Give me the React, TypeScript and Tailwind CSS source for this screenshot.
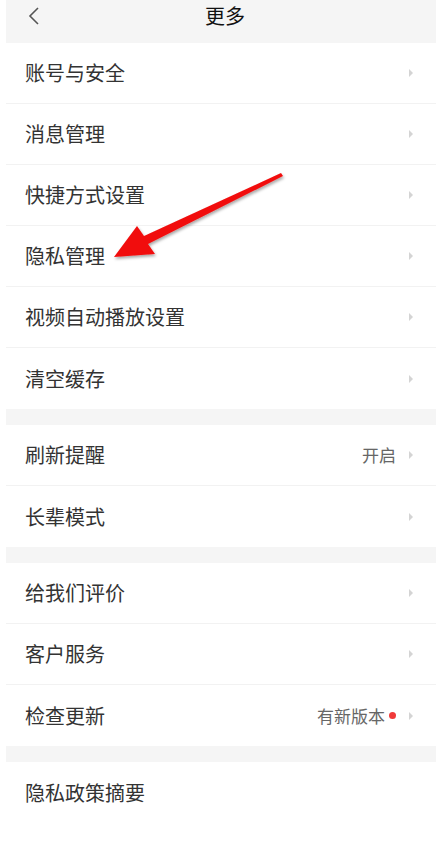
import React from "react";

type Row = { label: string; value?: string; dot?: boolean; noArrow?: boolean };

const sections: Row[][] = [
  [
    { label: "账号与安全" },
    { label: "消息管理" },
    { label: "快捷方式设置" },
    { label: "隐私管理" },
    { label: "视频自动播放设置" },
    { label: "清空缓存" },
  ],
  [{ label: "刷新提醒", value: "开启" }, { label: "长辈模式" }],
  [
    { label: "给我们评价" },
    { label: "客户服务" },
    { label: "检查更新", value: "有新版本", dot: true },
  ],
  [{ label: "隐私政策摘要", noArrow: true }],
];

const Chevron = () => (
  <svg width="6" height="10" viewBox="0 0 6 10" className="ml-[12px] mr-[22px]">
    <path d="M1 1 L5 5 L1 9 Z" fill="#d4d4d4" />
  </svg>
);

const SettingRow = ({ row, last }: { row: Row; last: boolean }) => (
  <div
    className={`flex h-[61px] items-center pl-[19px] ${
      last ? "" : "border-b border-[#f2f2f2]"
    }`}
  >
    <span className="flex-1 text-[20px] text-[#333333]">{row.label}</span>
    {row.value && (
      <span className="text-[17px] text-[#666666]">{row.value}</span>
    )}
    {row.dot && (
      <span className="ml-[4px] h-[7px] w-[7px] rounded-full bg-[#f03a3a]" />
    )}
    {!row.noArrow && <Chevron />}
  </div>
);

export default function App() {
  return (
    <div
      className="relative min-h-[841px] w-[436px] bg-white pl-[6px]"
      style={{ fontFamily: '"Noto Sans CJK SC", "Noto Sans", sans-serif' }}
    >
      <div className="relative flex h-[43px] items-center justify-center bg-[#f5f5f5]">
        <svg
          width="12"
          height="20"
          viewBox="0 0 12 20"
          className="absolute left-[22px] top-[6px]"
        >
          <path
            d="M10 2 L2 10 L10 18"
            fill="none"
            stroke="#555"
            strokeWidth="1.6"
          />
        </svg>
        <span className="-mt-[12px] ml-[8px] text-[20px] text-[#111111]">更多</span>
      </div>

      {sections.map((rows, i) => (
        <div key={i}>
          {i > 0 && <div className="h-[16px] bg-[#f5f5f5]" />}
          {rows.map((row, j) => (
            <SettingRow key={row.label} row={row} last={j === rows.length - 1} />
          ))}
        </div>
      ))}

      {/* red annotation arrow */}
      <svg
        width="436"
        height="841"
        className="pointer-events-none absolute left-0 top-0"
      >
        <defs>
          <filter id="sh" x="-20%" y="-20%" width="140%" height="140%">
            <feDropShadow dx="1" dy="2" stdDeviation="1.5" floodColor="#000" floodOpacity="0.35" />
          </filter>
        </defs>
        <polygon
          points="114,257 137,226 144,236 281,173 283,176 148,244 155,254"
          fill="#f10d0d"
          filter="url(#sh)"
        />
      </svg>
    </div>
  );
}
